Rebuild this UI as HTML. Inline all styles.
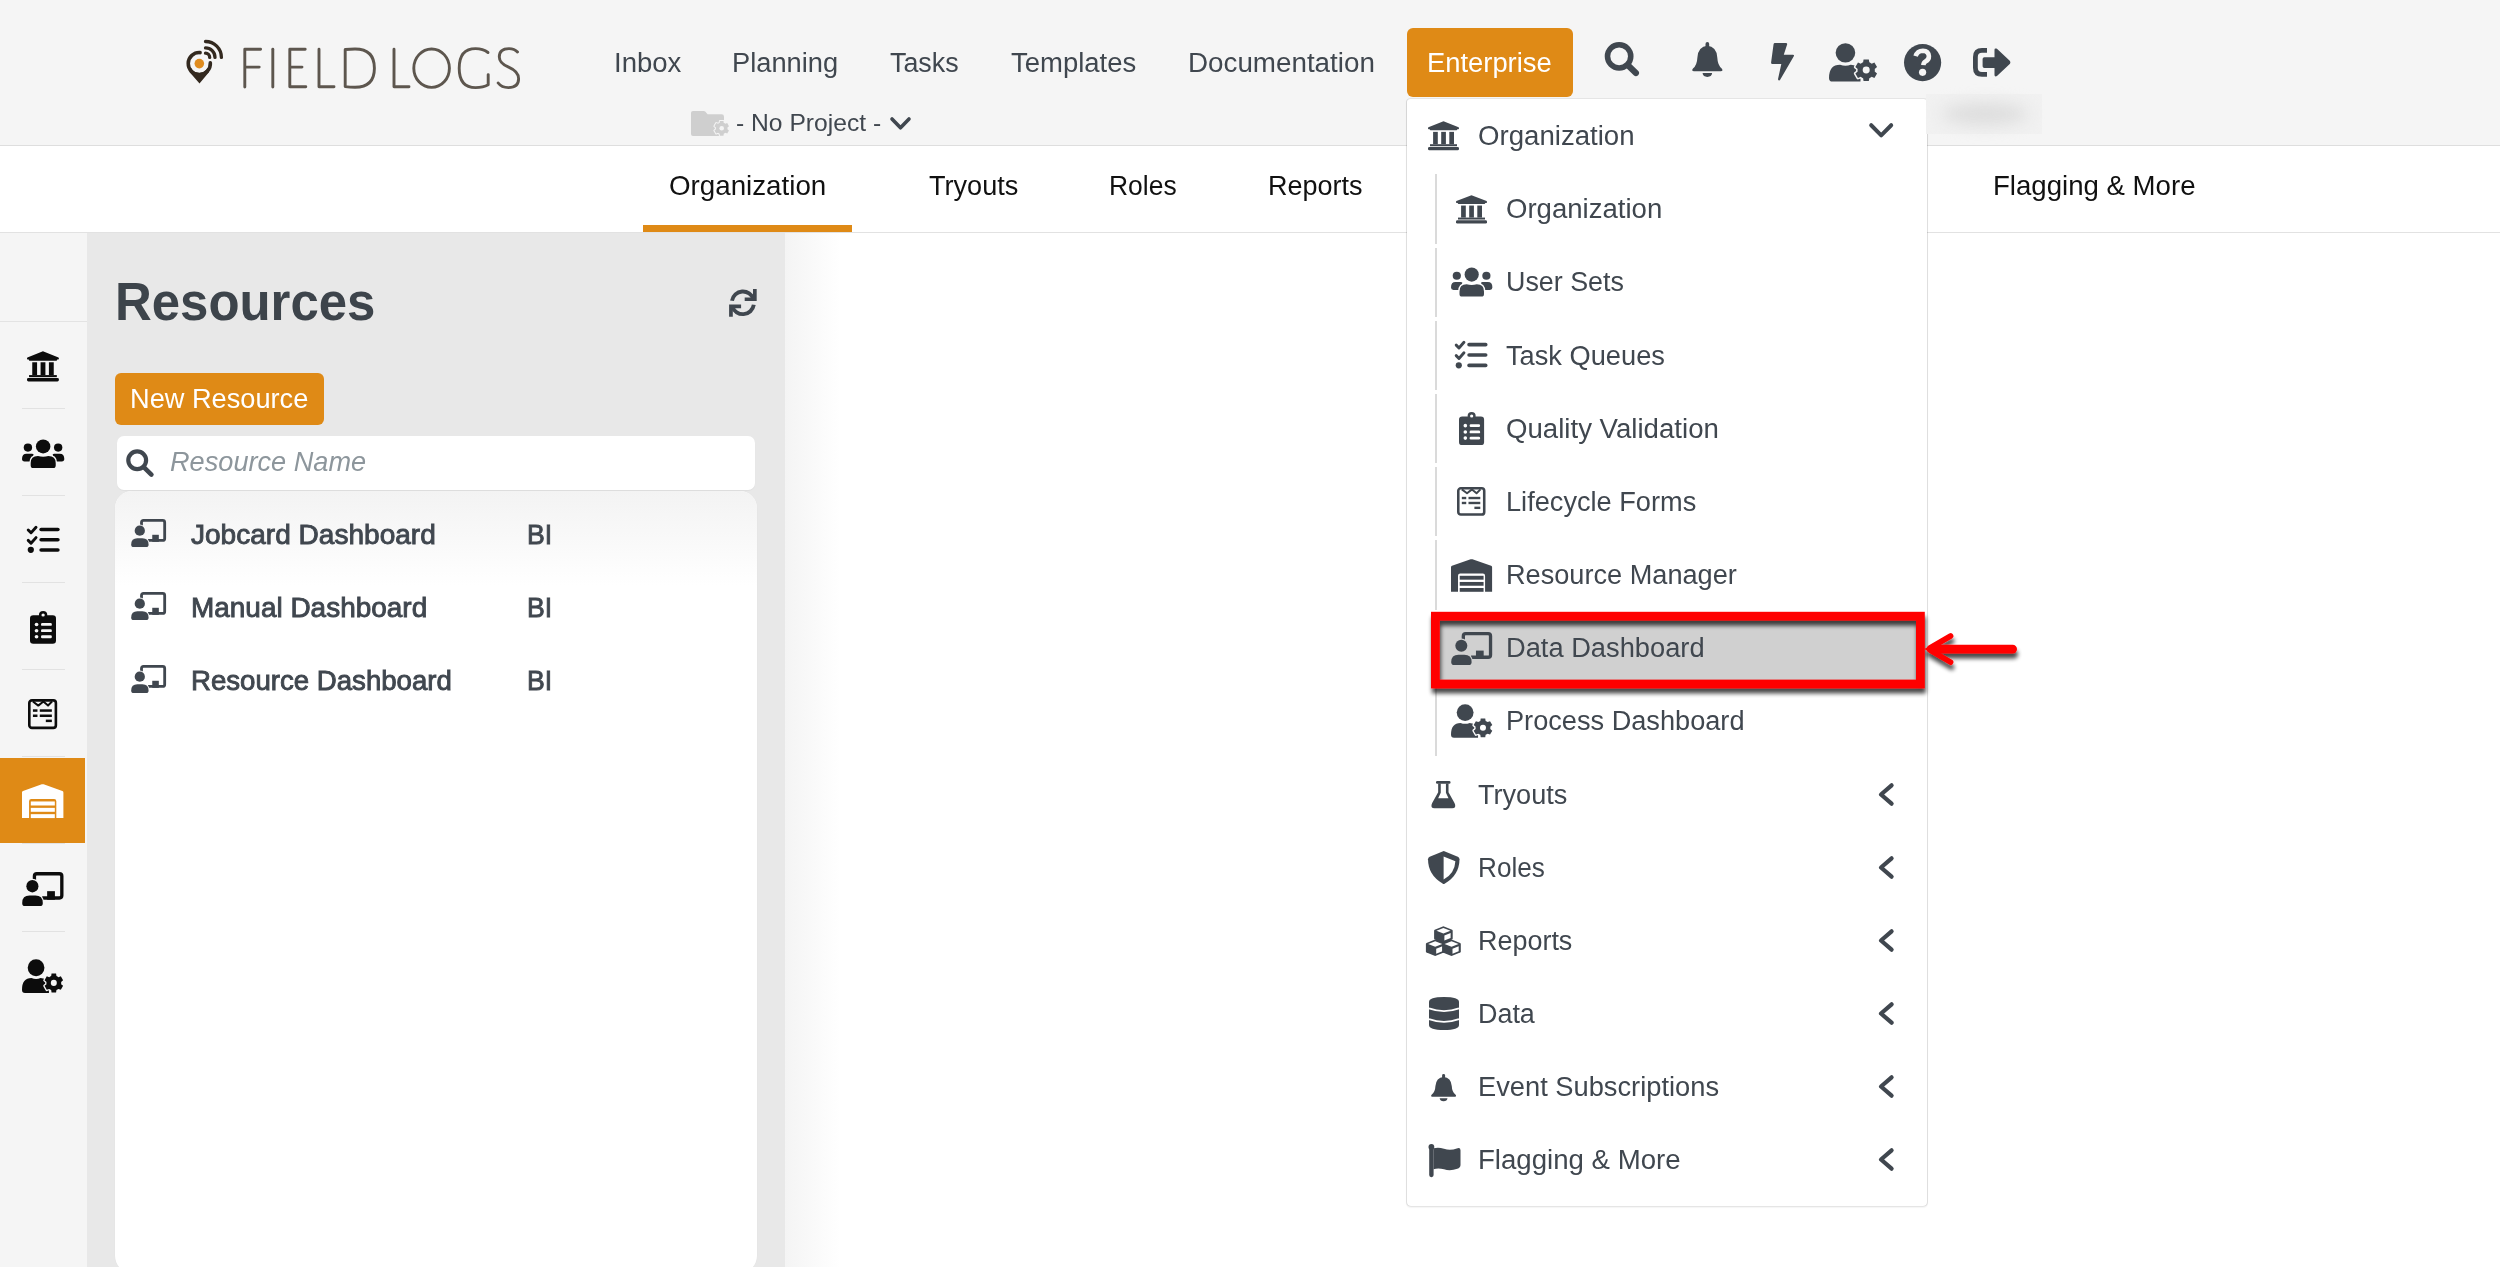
<!DOCTYPE html><html><head><meta charset="utf-8"><style>html,body{margin:0;padding:0;width:2500px;height:1267px;overflow:hidden;background:#fff;}body{position:relative;font-family:"Liberation Sans",sans-serif;}.t{position:absolute;white-space:nowrap;}</style></head><body>
<div style="position:absolute;left:0px;top:0px;width:2500px;height:145px;background:#f5f5f5;"></div>
<div style="position:absolute;left:0px;top:145px;width:2500px;height:1px;background:#dedede;"></div>
<div style="position:absolute;left:0px;top:146px;width:2500px;height:86px;background:#ffffff;"></div>
<div style="position:absolute;left:0px;top:232px;width:2500px;height:1px;background:#e2e2e2;"></div>
<div style="position:absolute;left:0px;top:233px;width:87px;height:1034px;background:#f5f5f5;"></div>
<div style="position:absolute;left:0px;top:321px;width:87px;height:1px;background:#e3e3e3;"></div>
<div style="position:absolute;left:87px;top:233px;width:698px;height:1034px;background:#e8e8e8;"></div>
<div style="position:absolute;left:785px;top:233px;width:55px;height:1034px;background:linear-gradient(to right,#f4f4f4,#ffffff);"></div>
<svg style="position:absolute;left:180px;top:30px;width:350px;height:70px" viewBox="180 30 350 70"><g fill="none" stroke="#5d564e" stroke-width="2.9" stroke-linecap="round" stroke-linejoin="round"><path d="M244.8 87 V49.2 H260.6 M244.8 67.1 H259.2"/><path d="M272.8 49.2 V87"/><path d="M305.2 49.2 H289.8 V86.8 H305.8 M289.8 67.1 H302"/><path d="M319 49.2 V86.8 H334"/><path d="M345.2 49.5 V86.6 Q350 87.2 355 87.2 Q374.4 87.2 374.4 68.2 Q374.4 49 355 49 Q350 49 345.2 49.5 Z"/><path d="M394 49.2 V86.8 H409"/><ellipse cx="431.6" cy="68.2" rx="17.8" ry="19.2"/><path d="M488 52.5 Q483 48.6 475.6 48.6 Q459.2 48.6 459.2 68.2 Q459.2 87.6 475.6 87.6 Q483.3 87.6 488.2 84.8 V74.6"/><path d="M517.5 52 Q514.5 48.6 509 48.6 Q499.3 48.6 499.3 57 Q499.3 63.2 508.6 67.2 Q518.6 71.5 518.6 78.8 Q518.6 87.6 508.4 87.6 Q501.6 87.6 498.2 83"/></g><g fill="none" stroke="#33291f" stroke-linecap="round"><path d="M210.32 62.83 A11.05 11.05 0 1 1 200.07 52.58" stroke-width="3.6"/><path d="M205.50 53.20 A4.2 4.2 0 0 1 209.70 57.40" stroke-width="3.3"/><path d="M205.50 47.90 A9.5 9.5 0 0 1 215.00 57.40" stroke-width="3.3"/><path d="M205.50 41.50 A15.9 15.9 0 0 1 221.40 57.40" stroke-width="3.3"/></g><path d="M189.5 71.9 L199.5 83.4 L209.1 71.9 L207.5 68 A9.3 9.3 0 0 1 191.1 68 Z" fill="#33291f"/><circle cx="199.3" cy="63.6" r="4.8" fill="#e08c1e"/></svg>
<div class="t" style="left:613.60px;top:47.90px;font-size:28.34px;line-height:28.34px;color:#40474f;font-weight:normal;font-style:normal;letter-spacing:0.000px;transform:scaleX(0.9719);transform-origin:0.00px 0;">Inbox</div>
<div class="t" style="left:732.40px;top:47.90px;font-size:28.34px;line-height:28.34px;color:#40474f;font-weight:normal;font-style:normal;letter-spacing:0.000px;transform:scaleX(0.9624);transform-origin:0.00px 0;">Planning</div>
<div class="t" style="left:890.40px;top:47.90px;font-size:28.34px;line-height:28.34px;color:#40474f;font-weight:normal;font-style:normal;letter-spacing:0.000px;transform:scaleX(0.9469);transform-origin:0.00px 0;">Tasks</div>
<div class="t" style="left:1010.90px;top:47.90px;font-size:28.34px;line-height:28.34px;color:#40474f;font-weight:normal;font-style:normal;letter-spacing:0.000px;transform:scaleX(0.9698);transform-origin:0.00px 0;">Templates</div>
<div class="t" style="left:1188.40px;top:47.90px;font-size:28.34px;line-height:28.34px;color:#40474f;font-weight:normal;font-style:normal;letter-spacing:0.000px;transform:scaleX(0.9806);transform-origin:0.00px 0;">Documentation</div>
<div style="position:absolute;left:1407px;top:28px;width:166px;height:69px;background:#df8a16;border-radius:6px;"></div>
<div class="t" style="left:1427.20px;top:48.20px;font-size:28.34px;line-height:28.34px;color:#ffffff;font-weight:normal;font-style:normal;letter-spacing:0.000px;transform:scaleX(0.9659);transform-origin:0.00px 0;">Enterprise</div>
<svg style="position:absolute;left:1604.00px;top:42.00px;width:35.00px;height:34.30px;overflow:visible;" viewBox="0 0 34 33.5" preserveAspectRatio="none" fill="#40474f" stroke="none"><circle cx="14.7" cy="14" r="11.3" fill="none" stroke="#40474f" stroke-width="5.4"/><line x1="24" y1="23.5" x2="31" y2="30.3" stroke="#40474f" stroke-width="6" stroke-linecap="round"/></svg>
<svg style="position:absolute;left:1691.60px;top:42.10px;width:30.70px;height:34.90px;overflow:visible;" viewBox="0 0 25 27.2" preserveAspectRatio="none" fill="#40474f" stroke="none"><rect x="11" y="0" width="3" height="5" rx="1.5"/><path d="M12.5 3 Q19.9 3.6 20.6 12 Q20.9 18 24.2 20.6 Q25.4 21.8 24.6 22.5 Q24.2 22.8 23.6 22.8 H1.4 Q0.8 22.8 0.4 22.5 Q-0.4 21.8 0.8 20.6 Q4.1 18 4.4 12 Q5.1 3.6 12.5 3 Z"/><path d="M8.6 24.2 H16.4 Q16 27.2 12.5 27.2 Q9 27.2 8.6 24.2 Z"/></svg>
<svg style="position:absolute;left:1771.40px;top:43.40px;width:23.60px;height:37.60px;overflow:visible;" viewBox="0 0 24 37.6" preserveAspectRatio="none" fill="#40474f" stroke="none"><path d="M2.6 1.2 Q2.8 0 4 0 H15.2 Q16.8 0 16.4 1.5 L13 11.8 H22.3 Q24 11.8 23.2 13.3 L9.3 36.8 Q8.6 37.8 7.7 37.2 Q7 36.7 7.2 35.8 L10.5 21 H1.4 Q-0.1 21 0.1 19.5 Z"/></svg>
<svg style="position:absolute;left:1829.00px;top:42.80px;width:48.40px;height:38.60px;overflow:visible;" viewBox="0 0 41.5 33.7" preserveAspectRatio="none" fill="#40474f" stroke="none"><circle cx="14.1" cy="8.6" r="8.4"/><path d="M0 30.5 Q0 18.9 9.5 18.9 Q14.1 20.7 18.7 18.9 Q27 19.3 27 28 V33.7 H3 Q0 33.7 0 30.5 Z"/><path d="M29.25 16.89 L29.64 14.37 L34.16 14.37 L34.55 16.89 L35.09 17.12 L35.60 17.39 L36.09 17.70 L36.56 18.05 L38.94 17.12 L41.20 21.05 L39.21 22.64 L39.28 23.22 L39.30 23.80 L39.28 24.38 L39.21 24.96 L41.20 26.55 L38.94 30.48 L36.56 29.55 L36.09 29.90 L35.60 30.21 L35.09 30.48 L34.55 30.71 L34.16 33.23 L29.64 33.23 L29.25 30.71 L28.71 30.48 L28.20 30.21 L27.71 29.90 L27.24 29.55 L24.86 30.48 L22.60 26.55 L24.59 24.96 L24.52 24.38 L24.50 23.80 L24.52 23.22 L24.59 22.64 L22.60 21.05 L24.86 17.12 L27.24 18.05 L27.71 17.70 L28.20 17.39 L28.71 17.12 Z" stroke="#f5f5f5" stroke-width="2.6" paint-order="stroke" stroke-linejoin="round"/><circle cx="31.9" cy="23.6" r="3" fill="#f5f5f5"/></svg>
<svg style="position:absolute;left:1904.00px;top:43.60px;width:37.20px;height:37.20px;overflow:visible;" viewBox="0 0 37.2 37.2" preserveAspectRatio="none" fill="#40474f" stroke="none"><circle cx="18.6" cy="18.6" r="18.6"/><path d="M11.6 12.2 Q13.3 6.7 18.9 6.7 Q24.6 6.9 24.9 12.2 Q25 15.6 21.5 17.6 Q19.5 18.8 19.4 21.2" fill="none" stroke="#f5f5f5" stroke-width="4.6" stroke-linecap="butt" stroke-linejoin="round"/><circle cx="18.6" cy="28.3" r="3.6" fill="#f5f5f5"/></svg>
<svg style="position:absolute;left:1973.20px;top:47.80px;width:37.60px;height:28.80px;overflow:visible;" viewBox="0 0 37.6 28.8" preserveAspectRatio="none" fill="#40474f" stroke="none"><path d="M14 2.4 H9 Q2.4 2.4 2.4 9 V19.8 Q2.4 26.4 9 26.4 H14" fill="none" stroke="#40474f" stroke-width="4.8" stroke-linecap="butt"/><path d="M9.6 11 Q9.6 9.2 11.4 9.2 H21.5 V1.8 Q21.5 0 23.3 0.5 Q24 0.7 24.5 1.2 L37 13 Q37.8 14.4 37 15.8 L24.5 27.6 Q24 28.1 23.3 28.3 Q21.5 28.8 21.5 27 V20 H11.4 Q9.6 20 9.6 18.2 Z"/></svg>
<svg style="position:absolute;left:690.50px;top:110.50px;width:38.30px;height:25.00px;overflow:visible;" viewBox="0 0 38.3 25" preserveAspectRatio="none" fill="#cfcfcf" stroke="none"><path d="M0 2 Q0 0 2 0 H12.8 Q13.6 0 14.2 0.6 L16.6 3.3 H30.6 Q33 3.3 33 5.7 V23 Q33 25 31 25 H2 Q0 25 0 23 Z"/><path d="M28.62 11.89 L28.93 9.91 L32.47 9.91 L32.78 11.89 L33.20 12.07 L33.60 12.28 L33.99 12.52 L34.35 12.79 L36.21 12.07 L37.99 15.14 L36.43 16.39 L36.48 16.84 L36.50 17.30 L36.48 17.76 L36.43 18.21 L37.99 19.46 L36.21 22.53 L34.35 21.81 L33.99 22.08 L33.60 22.32 L33.20 22.53 L32.78 22.71 L32.47 24.69 L28.93 24.69 L28.62 22.71 L28.20 22.53 L27.80 22.32 L27.41 22.08 L27.05 21.81 L25.19 22.53 L23.41 19.46 L24.97 18.21 L24.92 17.76 L24.90 17.30 L24.92 16.84 L24.97 16.39 L23.41 15.14 L25.19 12.07 L27.05 12.79 L27.41 12.52 L27.80 12.28 L28.20 12.07 Z" stroke="#f5f5f5" stroke-width="2" paint-order="stroke" stroke-linejoin="round"/><circle cx="30.7" cy="17.3" r="2.3" fill="#f5f5f5"/></svg>
<div class="t" style="left:735.90px;top:110.95px;font-size:24.27px;line-height:24.27px;color:#40474f;font-weight:normal;font-style:normal;letter-spacing:0.000px;transform:scaleX(1.0158);transform-origin:0.00px 0;">- No Project -</div>
<svg style="position:absolute;left:890.00px;top:116.50px;width:21.00px;height:13.00px;overflow:visible;" viewBox="0 0 21 13" preserveAspectRatio="none" fill="#40474f" stroke="none"><polyline points="2,2 10.5,10.8 19,2" fill="none" stroke="#40474f" stroke-width="3.6" stroke-linecap="round" stroke-linejoin="round"/></svg>
<div class="t" style="left:668.80px;top:171.65px;font-size:28.05px;line-height:28.05px;color:#111111;font-weight:normal;font-style:normal;letter-spacing:0.000px;transform:scaleX(0.9890);transform-origin:0.00px 0;">Organization</div>
<div class="t" style="left:929.30px;top:171.65px;font-size:28.05px;line-height:28.05px;color:#111111;font-weight:normal;font-style:normal;letter-spacing:0.000px;transform:scaleX(0.9654);transform-origin:0.00px 0;">Tryouts</div>
<div class="t" style="left:1108.90px;top:171.65px;font-size:28.05px;line-height:28.05px;color:#111111;font-weight:normal;font-style:normal;letter-spacing:0.000px;transform:scaleX(0.9428);transform-origin:0.00px 0;">Roles</div>
<div class="t" style="left:1267.60px;top:171.65px;font-size:28.05px;line-height:28.05px;color:#111111;font-weight:normal;font-style:normal;letter-spacing:0.000px;transform:scaleX(0.9623);transform-origin:0.00px 0;">Reports</div>
<div class="t" style="left:1993.20px;top:171.65px;font-size:28.05px;line-height:28.05px;color:#111111;font-weight:normal;font-style:normal;letter-spacing:0.000px;transform:scaleX(0.9840);transform-origin:0.00px 0;">Flagging &amp; More</div>
<div style="position:absolute;left:643px;top:225px;width:209px;height:7px;background:#df8a16;"></div>
<svg style="position:absolute;left:26.70px;top:350.60px;width:31.90px;height:30.40px;overflow:visible;" viewBox="0 0 31 29.4" preserveAspectRatio="none" fill="#0c0c0c" stroke="none"><path d="M15.5 0.3 L30.6 6.2 Q31 6.5 31 7.2 V7.6 Q31 8.2 30.3 8.2 H29.2 V8.6 Q29.2 9.4 28.4 9.4 H2.6 Q1.8 9.4 1.8 8.6 V8.2 H0.7 Q0 8.2 0 7.6 V7.2 Q0 6.5 0.4 6.2 Z"/><rect x="5.1" y="10.9" width="4.7" height="12.4"/><rect x="13.2" y="10.9" width="4.7" height="12.4"/><rect x="21.3" y="10.9" width="4.7" height="12.4"/><rect x="2" y="23.3" width="27" height="2"/><rect x="0" y="26" width="31" height="3.4" rx="1.4"/></svg>
<svg style="position:absolute;left:21.50px;top:438.50px;width:42.30px;height:29.00px;overflow:visible;" viewBox="0 0 41.4 29.6" preserveAspectRatio="none" fill="#0c0c0c" stroke="none"><circle cx="5.8" cy="8.8" r="4.1"/><circle cx="35.4" cy="8.8" r="4.1"/><path d="M0 20.5 Q0 15.1 4.5 15.1 H10 Q12 15.1 11 17 L9 23 H2.5 Q0 23 0 20.5 Z"/><path d="M41.4 20.5 Q41.4 15.1 36.9 15.1 H31.4 Q29.4 15.1 30.4 17 L32.4 23 H38.9 Q41.4 23 41.4 20.5 Z"/><path d="M8.5 27 V24.5 Q8.5 17.4 15.6 17.4 Q20.7 18.9 25.8 17.4 Q33 17.4 33 24.5 V27 Q33 29.6 30.5 29.6 H11 Q8.5 29.6 8.5 27 Z" stroke="#f5f5f5" stroke-width="2.8" paint-order="stroke"/><circle cx="20.7" cy="7.6" r="7.1"/></svg>
<svg style="position:absolute;left:26.70px;top:526.00px;width:32.70px;height:26.80px;overflow:visible;" viewBox="0 0 32.6 27" preserveAspectRatio="none" fill="#0c0c0c" stroke="none"><g fill="none" stroke="#0c0c0c" stroke-width="2.9" stroke-linecap="round" stroke-linejoin="round"><polyline points="1.2,4.1 4,6.9 9,1.3"/><polyline points="1.2,14.5 4,17.3 9,11.7"/></g><circle cx="3.8" cy="24" r="3.1"/><rect x="12.3" y="1.7" width="20.3" height="3.7" rx="1.8"/><rect x="12.3" y="12" width="20.3" height="3.7" rx="1.8"/><rect x="12.3" y="22.3" width="20.3" height="3.7" rx="1.8"/></svg>
<svg style="position:absolute;left:29.70px;top:611.00px;width:26.00px;height:32.70px;overflow:visible;" viewBox="0 0 25 33" preserveAspectRatio="none" fill="#0c0c0c" stroke="none"><rect x="0" y="4.4" width="25" height="28.6" rx="3.2"/><circle cx="12.6" cy="4" r="4"/><circle cx="12.6" cy="4" r="1.6" fill="#f5f5f5"/><g fill="#f5f5f5"><circle cx="6.3" cy="13.6" r="1.8"/><circle cx="6.3" cy="19.9" r="1.8"/><circle cx="6.3" cy="26" r="1.8"/><rect x="10.6" y="12.2" width="10.4" height="2.8" rx="1.2"/><rect x="10.6" y="18.5" width="10.4" height="2.8" rx="1.2"/><rect x="10.6" y="24.6" width="10.4" height="2.8" rx="1.2"/></g></svg>
<svg style="position:absolute;left:28.30px;top:698.70px;width:29.20px;height:30.20px;overflow:visible;" viewBox="0 0 29 29" preserveAspectRatio="none" fill="#0c0c0c" stroke="none"><rect x="1.3" y="1.3" width="26.4" height="26.4" rx="2.6" fill="none" stroke="#0c0c0c" stroke-width="2.6"/><polyline points="4.9,2.4 10.2,6.3 15.3,2.4 19.9,6.3 23.9,2.4" fill="none" stroke="#0c0c0c" stroke-width="2" stroke-linejoin="round"/><rect x="4.9" y="9.9" width="4.5" height="2.4"/><rect x="11.7" y="9.9" width="12" height="2.4"/><rect x="4.9" y="14.9" width="4.5" height="2.4"/><rect x="11.7" y="14.9" width="12" height="2.4"/><rect x="17.7" y="19.8" width="6" height="2.4"/></svg>
<div style="position:absolute;left:22px;top:408px;width:43px;height:1px;background:#e2e2e2;"></div>
<div style="position:absolute;left:22px;top:495px;width:43px;height:1px;background:#e2e2e2;"></div>
<div style="position:absolute;left:22px;top:582px;width:43px;height:1px;background:#e2e2e2;"></div>
<div style="position:absolute;left:22px;top:669px;width:43px;height:1px;background:#e2e2e2;"></div>
<div style="position:absolute;left:22px;top:756px;width:43px;height:1px;background:#e2e2e2;"></div>
<div style="position:absolute;left:22px;top:843px;width:43px;height:1px;background:#e2e2e2;"></div>
<div style="position:absolute;left:22px;top:931px;width:43px;height:1px;background:#e2e2e2;"></div>
<div style="position:absolute;left:0px;top:758px;width:85px;height:85px;background:#df8a16;"></div>
<svg style="position:absolute;left:21.90px;top:784.00px;width:41.40px;height:34.10px;overflow:visible;" viewBox="0 0 41 33" preserveAspectRatio="none" fill="#ffffff" stroke="none"><path d="M0 33 V8.3 Q0 7.2 1 6.8 L19.6 0.3 Q20.5 0 21.4 0.3 L40 6.8 Q41 7.2 41 8.3 V33 H34 V16.8 Q34 14.6 31.8 14.6 H9.2 Q7 14.6 7 16.8 V33 Z"/><rect x="8.7" y="16.9" width="23.8" height="3.9"/><rect x="8.7" y="23.1" width="23.8" height="3.8"/><rect x="8.7" y="29.2" width="23.8" height="3.8"/></svg>
<svg style="position:absolute;left:21.90px;top:871.70px;width:41.40px;height:34.10px;overflow:visible;" viewBox="0 0 41 33.1" preserveAspectRatio="none" fill="#0c0c0c" stroke="none"><path d="M12.3 8.5 V4 Q12.3 1.65 14.6 1.65 H37.1 Q39.45 1.65 39.45 4 V22.9 Q39.45 25.25 37.1 25.25 H20" fill="none" stroke="#0c0c0c" stroke-width="3.3"/><rect x="24.9" y="18.6" width="7.7" height="8.3"/><g stroke="#f5f5f5" stroke-width="2.4" paint-order="stroke"><circle cx="10.3" cy="13.8" r="6"/><path d="M0.2 30 Q0.2 22.8 7.5 22.8 H13.3 Q20.6 22.8 20.6 30 Q20.6 33.1 17.7 33.1 H3.1 Q0.2 33.1 0.2 30 Z"/></g></svg>
<svg style="position:absolute;left:21.90px;top:959.40px;width:41.40px;height:34.10px;overflow:visible;" viewBox="0 0 41.5 33.7" preserveAspectRatio="none" fill="#0c0c0c" stroke="none"><circle cx="14.1" cy="8.6" r="8.4"/><path d="M0 30.5 Q0 18.9 9.5 18.9 Q14.1 20.7 18.7 18.9 Q27 19.3 27 28 V33.7 H3 Q0 33.7 0 30.5 Z"/><path d="M29.25 16.89 L29.64 14.37 L34.16 14.37 L34.55 16.89 L35.09 17.12 L35.60 17.39 L36.09 17.70 L36.56 18.05 L38.94 17.12 L41.20 21.05 L39.21 22.64 L39.28 23.22 L39.30 23.80 L39.28 24.38 L39.21 24.96 L41.20 26.55 L38.94 30.48 L36.56 29.55 L36.09 29.90 L35.60 30.21 L35.09 30.48 L34.55 30.71 L34.16 33.23 L29.64 33.23 L29.25 30.71 L28.71 30.48 L28.20 30.21 L27.71 29.90 L27.24 29.55 L24.86 30.48 L22.60 26.55 L24.59 24.96 L24.52 24.38 L24.50 23.80 L24.52 23.22 L24.59 22.64 L22.60 21.05 L24.86 17.12 L27.24 18.05 L27.71 17.70 L28.20 17.39 L28.71 17.12 Z" stroke="#f5f5f5" stroke-width="2.6" paint-order="stroke" stroke-linejoin="round"/><circle cx="31.9" cy="23.6" r="3" fill="#f5f5f5"/></svg>
<div class="t" style="left:115.30px;top:275.37px;font-size:53.78px;line-height:53.78px;color:#3d444b;font-weight:bold;font-style:normal;letter-spacing:0.000px;transform:scaleX(0.9469);transform-origin:0.00px 0;">Resources</div>
<svg style="position:absolute;left:728.80px;top:289.20px;width:27.70px;height:27.80px;overflow:visible;" viewBox="0 0 27.7 27.8" preserveAspectRatio="none" fill="#40474f" stroke="none"><path d="M2.99 11.81 A11.1 11.1 0 0 1 24.51 10.12" fill="none" stroke="#40474f" stroke-width="3.9"/><path d="M24 -0.1 H27.7 V12.1 H15.7 V8.4 H24 Z"/><g transform="rotate(180 13.9 13.8)"><path d="M2.99 11.81 A11.1 11.1 0 0 1 24.51 10.12" fill="none" stroke="#40474f" stroke-width="3.9"/><path d="M24 -0.1 H27.7 V12.1 H15.7 V8.4 H24 Z"/></g></svg>
<div style="position:absolute;left:115px;top:373px;width:209px;height:52px;background:#df8a16;border-radius:6px;"></div>
<div class="t" style="left:130.40px;top:384.66px;font-size:27.33px;line-height:27.33px;color:#ffffff;font-weight:normal;font-style:normal;letter-spacing:0.000px;transform:scaleX(0.9947);transform-origin:0.00px 0;">New Resource</div>
<div style="position:absolute;left:117px;top:436px;width:638px;height:54px;background:#ffffff;border-radius:7px;box-shadow:0 1px 1px rgba(0,0,0,0.04);"></div>
<svg style="position:absolute;left:125.70px;top:448.70px;width:27.80px;height:27.90px;overflow:visible;" viewBox="0 0 27.8 27.9" preserveAspectRatio="none" fill="#40474f" stroke="none"><circle cx="11.2" cy="11.3" r="8.9" fill="none" stroke="#40474f" stroke-width="4.2"/><line x1="18" y1="18.3" x2="25.4" y2="25.6" stroke="#40474f" stroke-width="4.6" stroke-linecap="round"/></svg>
<div class="t" style="left:170.40px;top:448.51px;font-size:27.03px;line-height:27.03px;color:#8d969c;font-weight:normal;font-style:italic;letter-spacing:0.000px;transform:scaleX(1.0049);transform-origin:0.00px 0;">Resource Name</div>
<div style="position:absolute;left:115px;top:491px;width:642px;height:782px;border-radius:17px;background:#fff;overflow:hidden;box-shadow:0 0 1px rgba(0,0,0,0.08);"><div style="position:absolute;left:0;top:0;width:100%;height:95px;background:linear-gradient(#f3f3f3,#ffffff);"></div></div>
<svg style="position:absolute;left:130.60px;top:519.00px;width:35.00px;height:28.10px;overflow:visible;" viewBox="0 0 41 33.1" preserveAspectRatio="none" fill="#40474f" stroke="none"><path d="M12.3 8.5 V4 Q12.3 1.65 14.6 1.65 H37.1 Q39.45 1.65 39.45 4 V22.9 Q39.45 25.25 37.1 25.25 H20" fill="none" stroke="#40474f" stroke-width="3.3"/><rect x="24.9" y="18.6" width="7.7" height="8.3"/><g stroke="#f7f7f7" stroke-width="2.4" paint-order="stroke"><circle cx="10.3" cy="13.8" r="6"/><path d="M0.2 30 Q0.2 22.8 7.5 22.8 H13.3 Q20.6 22.8 20.6 30 Q20.6 33.1 17.7 33.1 H3.1 Q0.2 33.1 0.2 30 Z"/></g></svg>
<div class="t" style="left:190.80px;top:520.33px;font-size:28.20px;line-height:28.20px;color:#40474f;font-weight:normal;font-style:normal;letter-spacing:0.000px;transform:scaleX(0.9951);transform-origin:0.00px 0;-webkit-text-stroke:0.9px #40474f;">Jobcard Dashboard</div>
<div class="t" style="left:527.00px;top:520.33px;font-size:28.20px;line-height:28.20px;color:#40474f;font-weight:normal;font-style:normal;letter-spacing:0.000px;transform:scaleX(0.9456);transform-origin:0.00px 0;-webkit-text-stroke:0.9px #40474f;">BI</div>
<svg style="position:absolute;left:130.60px;top:592.00px;width:35.00px;height:28.10px;overflow:visible;" viewBox="0 0 41 33.1" preserveAspectRatio="none" fill="#40474f" stroke="none"><path d="M12.3 8.5 V4 Q12.3 1.65 14.6 1.65 H37.1 Q39.45 1.65 39.45 4 V22.9 Q39.45 25.25 37.1 25.25 H20" fill="none" stroke="#40474f" stroke-width="3.3"/><rect x="24.9" y="18.6" width="7.7" height="8.3"/><g stroke="#ffffff" stroke-width="2.4" paint-order="stroke"><circle cx="10.3" cy="13.8" r="6"/><path d="M0.2 30 Q0.2 22.8 7.5 22.8 H13.3 Q20.6 22.8 20.6 30 Q20.6 33.1 17.7 33.1 H3.1 Q0.2 33.1 0.2 30 Z"/></g></svg>
<div class="t" style="left:190.80px;top:593.33px;font-size:28.20px;line-height:28.20px;color:#40474f;font-weight:normal;font-style:normal;letter-spacing:0.000px;transform:scaleX(0.9916);transform-origin:0.00px 0;-webkit-text-stroke:0.9px #40474f;">Manual Dashboard</div>
<div class="t" style="left:527.00px;top:593.33px;font-size:28.20px;line-height:28.20px;color:#40474f;font-weight:normal;font-style:normal;letter-spacing:0.000px;transform:scaleX(0.9456);transform-origin:0.00px 0;-webkit-text-stroke:0.9px #40474f;">BI</div>
<svg style="position:absolute;left:130.60px;top:665.00px;width:35.00px;height:28.10px;overflow:visible;" viewBox="0 0 41 33.1" preserveAspectRatio="none" fill="#40474f" stroke="none"><path d="M12.3 8.5 V4 Q12.3 1.65 14.6 1.65 H37.1 Q39.45 1.65 39.45 4 V22.9 Q39.45 25.25 37.1 25.25 H20" fill="none" stroke="#40474f" stroke-width="3.3"/><rect x="24.9" y="18.6" width="7.7" height="8.3"/><g stroke="#ffffff" stroke-width="2.4" paint-order="stroke"><circle cx="10.3" cy="13.8" r="6"/><path d="M0.2 30 Q0.2 22.8 7.5 22.8 H13.3 Q20.6 22.8 20.6 30 Q20.6 33.1 17.7 33.1 H3.1 Q0.2 33.1 0.2 30 Z"/></g></svg>
<div class="t" style="left:190.80px;top:666.33px;font-size:28.20px;line-height:28.20px;color:#40474f;font-weight:normal;font-style:normal;letter-spacing:0.000px;transform:scaleX(0.9794);transform-origin:0.00px 0;-webkit-text-stroke:0.9px #40474f;">Resource Dashboard</div>
<div class="t" style="left:527.00px;top:666.33px;font-size:28.20px;line-height:28.20px;color:#40474f;font-weight:normal;font-style:normal;letter-spacing:0.000px;transform:scaleX(0.9456);transform-origin:0.00px 0;-webkit-text-stroke:0.9px #40474f;">BI</div>
<div style="position:absolute;left:1407px;top:99px;width:520px;height:1107px;background:#fff;box-shadow:0 1px 2px rgba(0,0,0,0.14),-1px 0 0 rgba(0,0,0,0.09),1px 0 0 rgba(0,0,0,0.09),0 -1px 0 rgba(0,0,0,0.06);border-radius:3px 3px 4px 4px;"></div>
<svg style="position:absolute;left:1428.00px;top:121.00px;width:31.00px;height:29.30px;overflow:visible;" viewBox="0 0 31 29.4" preserveAspectRatio="none" fill="#40474f" stroke="none"><path d="M15.5 0.3 L30.6 6.2 Q31 6.5 31 7.2 V7.6 Q31 8.2 30.3 8.2 H29.2 V8.6 Q29.2 9.4 28.4 9.4 H2.6 Q1.8 9.4 1.8 8.6 V8.2 H0.7 Q0 8.2 0 7.6 V7.2 Q0 6.5 0.4 6.2 Z"/><rect x="5.1" y="10.9" width="4.7" height="12.4"/><rect x="13.2" y="10.9" width="4.7" height="12.4"/><rect x="21.3" y="10.9" width="4.7" height="12.4"/><rect x="2" y="23.3" width="27" height="2"/><rect x="0" y="26" width="31" height="3.4" rx="1.4"/></svg>
<div class="t" style="left:1477.90px;top:121.20px;font-size:28.34px;line-height:28.34px;color:#40474f;font-weight:normal;font-style:normal;letter-spacing:0.000px;transform:scaleX(0.9748);transform-origin:0.00px 0;">Organization</div>
<svg style="position:absolute;left:1869.00px;top:123.20px;width:24.40px;height:14.60px;overflow:visible;" viewBox="0 0 24.5 14.4" preserveAspectRatio="none" fill="#40474f" stroke="none"><polyline points="2.2,2.2 12.25,12.2 22.3,2.2" fill="none" stroke="#40474f" stroke-width="4" stroke-linecap="round" stroke-linejoin="round"/></svg>
<div style="position:absolute;left:1435px;top:174px;width:2px;height:70px;background:#dadada;"></div>
<div style="position:absolute;left:1435px;top:248px;width:2px;height:69px;background:#dadada;"></div>
<div style="position:absolute;left:1435px;top:321px;width:2px;height:69px;background:#dadada;"></div>
<div style="position:absolute;left:1435px;top:394px;width:2px;height:69px;background:#dadada;"></div>
<div style="position:absolute;left:1435px;top:467px;width:2px;height:69px;background:#dadada;"></div>
<div style="position:absolute;left:1435px;top:540px;width:2px;height:70px;background:#dadada;"></div>
<div style="position:absolute;left:1435px;top:614px;width:2px;height:69px;background:#dadada;"></div>
<div style="position:absolute;left:1435px;top:687px;width:2px;height:69px;background:#dadada;"></div>
<div style="position:absolute;left:1440px;top:620px;width:476px;height:60px;background:#d0d0d0;"></div>
<svg style="position:absolute;left:1456.00px;top:194.50px;width:31.00px;height:28.50px;overflow:visible;" viewBox="0 0 31 29.4" preserveAspectRatio="none" fill="#40474f" stroke="none"><path d="M15.5 0.3 L30.6 6.2 Q31 6.5 31 7.2 V7.6 Q31 8.2 30.3 8.2 H29.2 V8.6 Q29.2 9.4 28.4 9.4 H2.6 Q1.8 9.4 1.8 8.6 V8.2 H0.7 Q0 8.2 0 7.6 V7.2 Q0 6.5 0.4 6.2 Z"/><rect x="5.1" y="10.9" width="4.7" height="12.4"/><rect x="13.2" y="10.9" width="4.7" height="12.4"/><rect x="21.3" y="10.9" width="4.7" height="12.4"/><rect x="2" y="23.3" width="27" height="2"/><rect x="0" y="26" width="31" height="3.4" rx="1.4"/></svg>
<div class="t" style="left:1506.00px;top:194.20px;font-size:28.34px;line-height:28.34px;color:#40474f;font-weight:normal;font-style:normal;letter-spacing:0.000px;transform:scaleX(0.9729);transform-origin:0.00px 0;">Organization</div>
<svg style="position:absolute;left:1450.60px;top:267.00px;width:41.40px;height:29.50px;overflow:visible;" viewBox="0 0 41.4 29.6" preserveAspectRatio="none" fill="#40474f" stroke="none"><circle cx="5.8" cy="8.8" r="4.1"/><circle cx="35.4" cy="8.8" r="4.1"/><path d="M0 20.5 Q0 15.1 4.5 15.1 H10 Q12 15.1 11 17 L9 23 H2.5 Q0 23 0 20.5 Z"/><path d="M41.4 20.5 Q41.4 15.1 36.9 15.1 H31.4 Q29.4 15.1 30.4 17 L32.4 23 H38.9 Q41.4 23 41.4 20.5 Z"/><path d="M8.5 27 V24.5 Q8.5 17.4 15.6 17.4 Q20.7 18.9 25.8 17.4 Q33 17.4 33 24.5 V27 Q33 29.6 30.5 29.6 H11 Q8.5 29.6 8.5 27 Z" stroke="#ffffff" stroke-width="2.8" paint-order="stroke"/><circle cx="20.7" cy="7.6" r="7.1"/></svg>
<div class="t" style="left:1506.00px;top:267.37px;font-size:28.34px;line-height:28.34px;color:#40474f;font-weight:normal;font-style:normal;letter-spacing:0.000px;transform:scaleX(0.9482);transform-origin:0.00px 0;">User Sets</div>
<svg style="position:absolute;left:1455.20px;top:341.20px;width:32.50px;height:27.30px;overflow:visible;" viewBox="0 0 32.6 27" preserveAspectRatio="none" fill="#40474f" stroke="none"><g fill="none" stroke="#40474f" stroke-width="2.9" stroke-linecap="round" stroke-linejoin="round"><polyline points="1.2,4.1 4,6.9 9,1.3"/><polyline points="1.2,14.5 4,17.3 9,11.7"/></g><circle cx="3.8" cy="24" r="3.1"/><rect x="12.3" y="1.7" width="20.3" height="3.7" rx="1.8"/><rect x="12.3" y="12" width="20.3" height="3.7" rx="1.8"/><rect x="12.3" y="22.3" width="20.3" height="3.7" rx="1.8"/></svg>
<div class="t" style="left:1506.00px;top:340.54px;font-size:28.34px;line-height:28.34px;color:#40474f;font-weight:normal;font-style:normal;letter-spacing:0.000px;transform:scaleX(0.9610);transform-origin:0.00px 0;">Task Queues</div>
<svg style="position:absolute;left:1458.90px;top:411.60px;width:25.10px;height:33.10px;overflow:visible;" viewBox="0 0 25 33" preserveAspectRatio="none" fill="#40474f" stroke="none"><rect x="0" y="4.4" width="25" height="28.6" rx="3.2"/><circle cx="12.6" cy="4" r="4"/><circle cx="12.6" cy="4" r="1.6" fill="#ffffff"/><g fill="#ffffff"><circle cx="6.3" cy="13.6" r="1.8"/><circle cx="6.3" cy="19.9" r="1.8"/><circle cx="6.3" cy="26" r="1.8"/><rect x="10.6" y="12.2" width="10.4" height="2.8" rx="1.2"/><rect x="10.6" y="18.5" width="10.4" height="2.8" rx="1.2"/><rect x="10.6" y="24.6" width="10.4" height="2.8" rx="1.2"/></g></svg>
<div class="t" style="left:1506.00px;top:413.71px;font-size:28.34px;line-height:28.34px;color:#40474f;font-weight:normal;font-style:normal;letter-spacing:0.000px;transform:scaleX(0.9748);transform-origin:0.00px 0;">Quality Validation</div>
<svg style="position:absolute;left:1457.30px;top:487.10px;width:28.50px;height:28.80px;overflow:visible;" viewBox="0 0 29 29" preserveAspectRatio="none" fill="#40474f" stroke="none"><rect x="1.3" y="1.3" width="26.4" height="26.4" rx="2.6" fill="none" stroke="#40474f" stroke-width="2.6"/><polyline points="4.9,2.4 10.2,6.3 15.3,2.4 19.9,6.3 23.9,2.4" fill="none" stroke="#40474f" stroke-width="2" stroke-linejoin="round"/><rect x="4.9" y="9.9" width="4.5" height="2.4"/><rect x="11.7" y="9.9" width="12" height="2.4"/><rect x="4.9" y="14.9" width="4.5" height="2.4"/><rect x="11.7" y="14.9" width="12" height="2.4"/><rect x="17.7" y="19.8" width="6" height="2.4"/></svg>
<div class="t" style="left:1506.00px;top:486.88px;font-size:28.34px;line-height:28.34px;color:#40474f;font-weight:normal;font-style:normal;letter-spacing:0.000px;transform:scaleX(0.9592);transform-origin:0.00px 0;">Lifecycle Forms</div>
<svg style="position:absolute;left:1450.90px;top:558.50px;width:41.10px;height:32.80px;overflow:visible;" viewBox="0 0 41 33" preserveAspectRatio="none" fill="#40474f" stroke="none"><path d="M0 33 V8.3 Q0 7.2 1 6.8 L19.6 0.3 Q20.5 0 21.4 0.3 L40 6.8 Q41 7.2 41 8.3 V33 H34 V16.8 Q34 14.6 31.8 14.6 H9.2 Q7 14.6 7 16.8 V33 Z"/><rect x="8.7" y="16.9" width="23.8" height="3.9"/><rect x="8.7" y="23.1" width="23.8" height="3.8"/><rect x="8.7" y="29.2" width="23.8" height="3.8"/></svg>
<div class="t" style="left:1506.00px;top:560.05px;font-size:28.34px;line-height:28.34px;color:#40474f;font-weight:normal;font-style:normal;letter-spacing:0.000px;transform:scaleX(0.9581);transform-origin:0.00px 0;">Resource Manager</div>
<svg style="position:absolute;left:1450.90px;top:631.70px;width:41.10px;height:33.10px;overflow:visible;" viewBox="0 0 41 33.1" preserveAspectRatio="none" fill="#40474f" stroke="none"><path d="M12.3 8.5 V4 Q12.3 1.65 14.6 1.65 H37.1 Q39.45 1.65 39.45 4 V22.9 Q39.45 25.25 37.1 25.25 H20" fill="none" stroke="#40474f" stroke-width="3.3"/><rect x="24.9" y="18.6" width="7.7" height="8.3"/><g stroke="#d0d0d0" stroke-width="2.4" paint-order="stroke"><circle cx="10.3" cy="13.8" r="6"/><path d="M0.2 30 Q0.2 22.8 7.5 22.8 H13.3 Q20.6 22.8 20.6 30 Q20.6 33.1 17.7 33.1 H3.1 Q0.2 33.1 0.2 30 Z"/></g></svg>
<div class="t" style="left:1506.00px;top:633.22px;font-size:28.34px;line-height:28.34px;color:#40474f;font-weight:normal;font-style:normal;letter-spacing:0.000px;transform:scaleX(0.9625);transform-origin:0.00px 0;">Data Dashboard</div>
<svg style="position:absolute;left:1450.70px;top:704.40px;width:41.60px;height:33.80px;overflow:visible;" viewBox="0 0 41.5 33.7" preserveAspectRatio="none" fill="#40474f" stroke="none"><circle cx="14.1" cy="8.6" r="8.4"/><path d="M0 30.5 Q0 18.9 9.5 18.9 Q14.1 20.7 18.7 18.9 Q27 19.3 27 28 V33.7 H3 Q0 33.7 0 30.5 Z"/><path d="M29.25 16.89 L29.64 14.37 L34.16 14.37 L34.55 16.89 L35.09 17.12 L35.60 17.39 L36.09 17.70 L36.56 18.05 L38.94 17.12 L41.20 21.05 L39.21 22.64 L39.28 23.22 L39.30 23.80 L39.28 24.38 L39.21 24.96 L41.20 26.55 L38.94 30.48 L36.56 29.55 L36.09 29.90 L35.60 30.21 L35.09 30.48 L34.55 30.71 L34.16 33.23 L29.64 33.23 L29.25 30.71 L28.71 30.48 L28.20 30.21 L27.71 29.90 L27.24 29.55 L24.86 30.48 L22.60 26.55 L24.59 24.96 L24.52 24.38 L24.50 23.80 L24.52 23.22 L24.59 22.64 L22.60 21.05 L24.86 17.12 L27.24 18.05 L27.71 17.70 L28.20 17.39 L28.71 17.12 Z" stroke="#ffffff" stroke-width="2.6" paint-order="stroke" stroke-linejoin="round"/><circle cx="31.9" cy="23.6" r="3" fill="#ffffff"/></svg>
<div class="t" style="left:1506.00px;top:706.39px;font-size:28.34px;line-height:28.34px;color:#40474f;font-weight:normal;font-style:normal;letter-spacing:0.000px;transform:scaleX(0.9586);transform-origin:0.00px 0;">Process Dashboard</div>
<svg style="position:absolute;left:1431.30px;top:781.00px;width:24.70px;height:27.30px;overflow:visible;" viewBox="0 0 24.8 27.4" preserveAspectRatio="none" fill="#40474f" stroke="none"><rect x="5" y="0" width="14.6" height="2.8" rx="1.3"/><path d="M7.2 2.5 V11.2 L1.2 22.2 Q0 24.5 0.6 26 Q1.3 27.4 3.5 27.4 H21.3 Q23.5 27.4 24.2 26 Q24.8 24.5 23.6 22.2 L17.6 11.2 V2.5 H15 V11.9 L17.6 17.3 H7.2 L9.8 11.9 V2.5 Z"/></svg>
<div class="t" style="left:1477.70px;top:779.60px;font-size:28.34px;line-height:28.34px;color:#40474f;font-weight:normal;font-style:normal;letter-spacing:0.000px;transform:scaleX(0.9567);transform-origin:0.00px 0;">Tryouts</div>
<svg style="position:absolute;left:1878.20px;top:783.10px;width:16.60px;height:23.00px;overflow:visible;" viewBox="0 0 16.6 23" preserveAspectRatio="none" fill="#40474f" stroke="none"><polyline points="13.6,2.3 3,11.5 13.6,20.7" fill="none" stroke="#40474f" stroke-width="4.2" stroke-linecap="round" stroke-linejoin="round"/></svg>
<svg style="position:absolute;left:1427.80px;top:851.30px;width:31.50px;height:33.00px;overflow:visible;" viewBox="0 0 31.5 33" preserveAspectRatio="none" fill="#40474f" stroke="none"><path d="M15.75 0 L29.8 5.7 Q31.5 6.4 31.5 8.3 Q31.3 24.5 16.6 32.7 Q15.75 33.1 14.9 32.7 Q0.2 24.5 0 8.3 Q0 6.4 1.7 5.7 Z"/><path d="M15.6 5.4 L27.4 10.2 Q26.6 22.8 15.6 28.4 Z" fill="#ffffff"/></svg>
<div class="t" style="left:1477.70px;top:852.80px;font-size:28.34px;line-height:28.34px;color:#40474f;font-weight:normal;font-style:normal;letter-spacing:0.000px;transform:scaleX(0.9228);transform-origin:0.00px 0;">Roles</div>
<svg style="position:absolute;left:1878.20px;top:856.30px;width:16.60px;height:23.00px;overflow:visible;" viewBox="0 0 16.6 23" preserveAspectRatio="none" fill="#40474f" stroke="none"><polyline points="13.6,2.3 3,11.5 13.6,20.7" fill="none" stroke="#40474f" stroke-width="4.2" stroke-linecap="round" stroke-linejoin="round"/></svg>
<svg style="position:absolute;left:1426.00px;top:925.90px;width:34.80px;height:30.80px;overflow:visible;" viewBox="0 0 34.8 31" preserveAspectRatio="none" fill="#40474f" stroke="none"><path d="M9.2 14.2 L17.4 11 L25.5 14.2 L17.4 20 Z"/><path d="M17.4 0.3 L26.099999999999998 3.6999999999999997 Q26.7 4.0 26.7 4.7 V12.5 Q26.7 13.200000000000001 26.099999999999998 13.5 L17.4 16.900000000000002 L8.7 13.5 Q8.099999999999998 13.200000000000001 8.099999999999998 12.5 V4.7 Q8.099999999999998 4.0 8.7 3.6999999999999997 Z"/><path d="M17.4 2.0 L24.5 4.8 L17.4 7.6 L10.399999999999999 4.8 Z" fill="#ffffff"/><path d="M18.4 9.5 L24.599999999999998 7.0 V12.200000000000001 L18.4 14.700000000000001 Z" fill="#ffffff"/><path d="M9.2 13.6 L17.9 17.0 Q18.5 17.3 18.5 18.0 V25.799999999999997 Q18.5 26.5 17.9 26.799999999999997 L9.2 30.200000000000003 L0.5 26.799999999999997 Q-0.10000000000000142 26.5 -0.10000000000000142 25.799999999999997 V18.0 Q-0.10000000000000142 17.3 0.5 17.0 Z"/><path d="M9.2 15.299999999999999 L16.299999999999997 18.1 L9.2 20.9 L2.1999999999999993 18.1 Z" fill="#ffffff"/><path d="M10.2 22.799999999999997 L16.4 20.3 V25.5 L10.2 28.0 Z" fill="#ffffff"/><path d="M25.5 13.6 L34.2 17.0 Q34.8 17.3 34.8 18.0 V25.799999999999997 Q34.8 26.5 34.2 26.799999999999997 L25.5 30.200000000000003 L16.8 26.799999999999997 Q16.2 26.5 16.2 25.799999999999997 V18.0 Q16.2 17.3 16.8 17.0 Z"/><path d="M25.5 15.299999999999999 L32.6 18.1 L25.5 20.9 L18.5 18.1 Z" fill="#ffffff"/><path d="M26.5 22.799999999999997 L32.7 20.3 V25.5 L26.5 28.0 Z" fill="#ffffff"/></svg>
<div class="t" style="left:1477.70px;top:925.80px;font-size:28.34px;line-height:28.34px;color:#40474f;font-weight:normal;font-style:normal;letter-spacing:0.000px;transform:scaleX(0.9511);transform-origin:0.00px 0;">Reports</div>
<svg style="position:absolute;left:1878.20px;top:929.30px;width:16.60px;height:23.00px;overflow:visible;" viewBox="0 0 16.6 23" preserveAspectRatio="none" fill="#40474f" stroke="none"><polyline points="13.6,2.3 3,11.5 13.6,20.7" fill="none" stroke="#40474f" stroke-width="4.2" stroke-linecap="round" stroke-linejoin="round"/></svg>
<svg style="position:absolute;left:1428.50px;top:997.40px;width:30.00px;height:32.90px;overflow:visible;" viewBox="0 0 30 33" preserveAspectRatio="none" fill="#40474f" stroke="none"><path d="M0 5 Q0 0 15 0 Q30 0 30 5 V28 Q30 33 15 33 Q0 33 0 28 Z"/><path d="M0 11.4 Q15 16.8 30 11.4" fill="none" stroke="#ffffff" stroke-width="1.8"/><path d="M0 22.2 Q15 27.6 30 22.2" fill="none" stroke="#ffffff" stroke-width="1.8"/></svg>
<div class="t" style="left:1477.70px;top:998.90px;font-size:28.34px;line-height:28.34px;color:#40474f;font-weight:normal;font-style:normal;letter-spacing:0.000px;transform:scaleX(0.9499);transform-origin:0.00px 0;">Data</div>
<svg style="position:absolute;left:1878.20px;top:1002.40px;width:16.60px;height:23.00px;overflow:visible;" viewBox="0 0 16.6 23" preserveAspectRatio="none" fill="#40474f" stroke="none"><polyline points="13.6,2.3 3,11.5 13.6,20.7" fill="none" stroke="#40474f" stroke-width="4.2" stroke-linecap="round" stroke-linejoin="round"/></svg>
<svg style="position:absolute;left:1431.00px;top:1073.80px;width:25.20px;height:27.20px;overflow:visible;" viewBox="0 0 25 27.2" preserveAspectRatio="none" fill="#40474f" stroke="none"><rect x="11" y="0" width="3" height="5" rx="1.5"/><path d="M12.5 3 Q19.9 3.6 20.6 12 Q20.9 18 24.2 20.6 Q25.4 21.8 24.6 22.5 Q24.2 22.8 23.6 22.8 H1.4 Q0.8 22.8 0.4 22.5 Q-0.4 21.8 0.8 20.6 Q4.1 18 4.4 12 Q5.1 3.6 12.5 3 Z"/><path d="M8.6 24.2 H16.4 Q16 27.2 12.5 27.2 Q9 27.2 8.6 24.2 Z"/></svg>
<div class="t" style="left:1477.70px;top:1071.60px;font-size:28.34px;line-height:28.34px;color:#40474f;font-weight:normal;font-style:normal;letter-spacing:0.000px;transform:scaleX(0.9627);transform-origin:0.00px 0;">Event Subscriptions</div>
<svg style="position:absolute;left:1878.20px;top:1075.10px;width:16.60px;height:23.00px;overflow:visible;" viewBox="0 0 16.6 23" preserveAspectRatio="none" fill="#40474f" stroke="none"><polyline points="13.6,2.3 3,11.5 13.6,20.7" fill="none" stroke="#40474f" stroke-width="4.2" stroke-linecap="round" stroke-linejoin="round"/></svg>
<svg style="position:absolute;left:1428.50px;top:1143.80px;width:31.50px;height:33.20px;overflow:visible;" viewBox="0 0 31.5 33" preserveAspectRatio="none" fill="#40474f" stroke="none"><rect x="0.2" y="2" width="4.4" height="31" rx="2.1"/><circle cx="2.4" cy="2.9" r="2.9"/><path d="M4.5 4.3 Q9.5 2.8 15 4.8 Q21.5 7 27.8 4.4 Q31.5 3.2 31.5 6.2 V20.8 Q31.5 23.4 28.3 24.6 Q21.5 27.2 15 25.2 Q9.5 23.5 4.5 25 Z"/></svg>
<div class="t" style="left:1477.70px;top:1144.90px;font-size:28.34px;line-height:28.34px;color:#40474f;font-weight:normal;font-style:normal;letter-spacing:0.000px;transform:scaleX(0.9750);transform-origin:0.00px 0;">Flagging &amp; More</div>
<svg style="position:absolute;left:1878.20px;top:1148.40px;width:16.60px;height:23.00px;overflow:visible;" viewBox="0 0 16.6 23" preserveAspectRatio="none" fill="#40474f" stroke="none"><polyline points="13.6,2.3 3,11.5 13.6,20.7" fill="none" stroke="#40474f" stroke-width="4.2" stroke-linecap="round" stroke-linejoin="round"/></svg>
<svg style="position:absolute;left:1400px;top:590px;width:660px;height:120px;overflow:visible" viewBox="1400 590 660 120"><defs><filter id="sh" x="-10%" y="-50%" width="120%" height="200%"><feGaussianBlur in="SourceAlpha" stdDeviation="2.2"/><feOffset dx="0.6" dy="4.6" result="b"/><feComponentTransfer><feFuncA type="linear" slope="0.72"/></feComponentTransfer><feMerge><feMergeNode/><feMergeNode in="SourceGraphic"/></feMerge></filter></defs><g filter="url(#sh)"><rect x="1435.4" y="616.2" width="485" height="67.8" fill="none" stroke="#ff0000" stroke-width="8.8"/><g stroke="#ff0000" stroke-width="8.8" stroke-linecap="round" stroke-linejoin="round" fill="none"><line x1="1935" y1="649.1" x2="2012.6" y2="649.1"/></g><g stroke="#ff0000" stroke-width="5.6" stroke-linecap="round" fill="none"><line x1="1930" y1="648" x2="1950.6" y2="636"/><line x1="1930" y1="650.2" x2="1950.6" y2="662.2"/></g><path d="M1924.3 649.1 L1944 637.5 L1941 644.6 V653.6 L1944 660.7 Z" fill="#ff0000"/></g></svg>
<div style="position:absolute;left:1926px;top:94px;width:116px;height:40px;background:#f1f1f1;"></div>
<div style="position:absolute;left:1942px;top:103px;width:86px;height:22px;border-radius:50%;background:#dddddd;filter:blur(8px);"></div>
</body></html>
